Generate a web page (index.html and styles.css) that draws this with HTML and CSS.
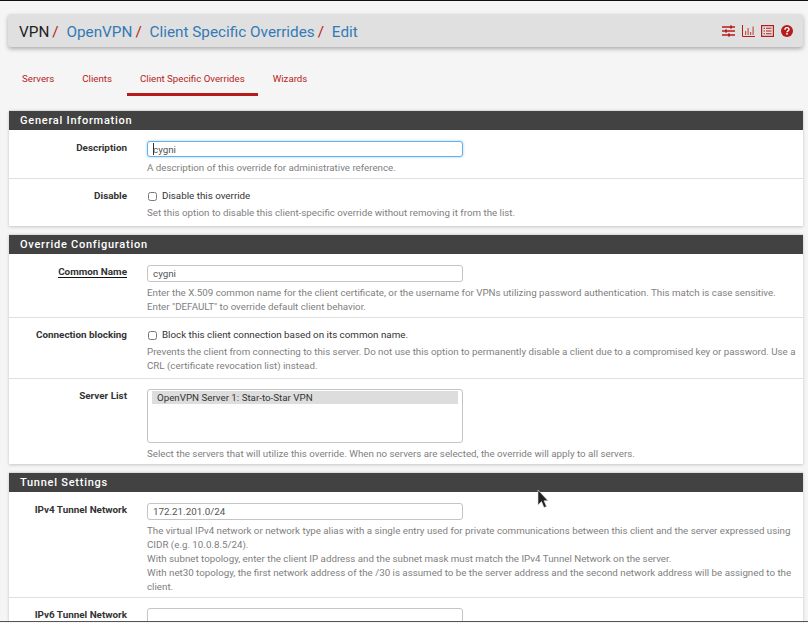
FILE: index.html
```html
<!DOCTYPE html>
<html lang="en">
<head>
  <meta charset="UTF-8">
  <title>VPN: OpenVPN: Client Specific Overrides: Edit</title>
  <link rel="stylesheet" href="styles.css">
</head>
<body>
  <div class="breadcrumb-bar">
    <div class="crumbs">
      <span>VPN</span><i>/</i>
      <a href="#">OpenVPN</a><i>/</i>
      <a href="#">Client Specific Overrides</a><i>/</i>
      <a href="#">Edit</a>
    </div>
    <div class="shortcuts">
      <svg width="13" height="12" viewBox="0 0 13 12"><path d="M0 2h13M0 6h13M0 10h13" stroke="#b71c1c" stroke-width="1.300"/><path d="M8 .5h2v3H8zM3 4.500h2v3H3zM6 8.500h2v3H6z" fill="#b71c1c"/></svg>
      <svg width="13" height="12" viewBox="0 0 13 12"><path d="M.5 0v11.500H13" stroke="#b71c1c" fill="none"/><path d="M3 6h1.200v4H3zM5.500 3h1.200v7H5.500zM8 7h1.200v3H8zM10.500 1.500h1.200V10h-1.200z" fill="#c2554d"/></svg>
      <svg width="13" height="12" viewBox="0 0 13 12"><rect x=".6" y=".6" width="11.800" height="10.800" fill="none" stroke="#b71c1c" stroke-width="1.200"/><path d="M2.500 3.300h1.500M5 3.300h5.500M2.500 6h1.500M5 6h5.500M2.500 8.700h1.500M5 8.700h5.500" stroke="#b71c1c" stroke-width="1.100"/></svg>
      <svg width="12" height="12" viewBox="0 0 12 12"><circle cx="6" cy="6" r="6" fill="#b71c1c"/><path d="M4 4.700C4 3.400 4.900 2.600 6 2.600S8 3.300 8 4.400C8 5.800 6 5.900 6 7.300" fill="none" stroke="#fff" stroke-width="1.400"/><rect x="5.200" y="8" width="1.600" height="1.600" fill="#fff"/></svg>
    </div>
  </div>

  <ul class="tabs">
    <li><a href="#">Servers</a></li>
    <li><a href="#">Clients</a></li>
    <li class="active"><a href="#">Client Specific Overrides</a></li>
    <li><a href="#">Wizards</a></li>
  </ul>

  <div class="panel">
    <h2 class="panel-title">General Information</h2>
    <div class="row">
      <label class="row-label">Description</label>
      <div class="row-body">
        <div class="caret-wrap"><input class="field focused" type="text" value="cygni"></div>
        <p class="help">A description of this override for administrative reference.</p>
      </div>
    </div>
    <div class="row row-check row-end">
      <label class="row-label">Disable</label>
      <div class="row-body">
        <label class="check"><input type="checkbox"> Disable this override</label>
        <p class="help">Set this option to disable this client-specific override without removing it from the list.</p>
      </div>
    </div>
  </div>

  <div class="panel">
    <h2 class="panel-title">Override Configuration</h2>
    <div class="row">
      <label class="row-label"><span class="required">Common Name</span></label>
      <div class="row-body">
        <input class="field" type="text" value="cygni">
        <p class="help">Enter the X.509 common name for the client certificate, or the username for VPNs utilizing password authentication. This match is case sensitive.<br>Enter "DEFAULT" to override default client behavior.</p>
      </div>
    </div>
    <div class="row row-check">
      <label class="row-label">Connection blocking</label>
      <div class="row-body">
        <label class="check"><input type="checkbox"> Block this client connection based on its common name.</label>
        <p class="help">Prevents the client from connecting to this server. Do not use this option to permanently disable a client due to a compromised key or password. Use a CRL (certificate revocation list) instead.</p>
      </div>
    </div>
    <div class="row">
      <label class="row-label">Server List</label>
      <div class="row-body">
        <div class="listbox"><div class="option">OpenVPN Server 1: Star-to-Star VPN</div></div>
        <p class="help">Select the servers that will utilize this override. When no servers are selected, the override will apply to all servers.</p>
      </div>
    </div>
  </div>

  <div class="panel">
    <h2 class="panel-title">Tunnel Settings</h2>
    <div class="row">
      <label class="row-label">IPv4 Tunnel Network</label>
      <div class="row-body">
        <input class="field" type="text" value="172.21.201.0/24">
        <p class="help">The virtual IPv4 network or network type alias with a single entry used for private communications between this client and the server expressed using CIDR (e.g. 10.0.8.5/24).<br>With subnet topology, enter the client IP address and the subnet mask must match the IPv4 Tunnel Network on the server.<br>With net30 topology, the first network address of the /30 is assumed to be the server address and the second network address will be assigned to the client.</p>
      </div>
    </div>
    <div class="row">
      <label class="row-label">IPv6 Tunnel Network</label>
      <div class="row-body">
        <input class="field" type="text">
      </div>
    </div>
  </div>

  <div class="screen-edge"></div>
  <svg class="cursor" width="12" height="20" viewBox="0 0 12 20"><path d="M1 1v15l3.500-3.500 2.500 6 2.500-1-2.500-5.800H11z" fill="#222" stroke="#ddd" stroke-width=".6"/></svg>
</body>
</html>
```

FILE: styles.css
```css
html, body {
  height: 623px;
  overflow: hidden;
}
body {
  margin: 0;
  padding: 13px 5px 0 9px;
  background-color: #f5f5f5;
  border-top: 1px solid #111;
  box-sizing: border-box;
  font-family: Roboto, "Liberation Sans", sans-serif;
  font-size: 9.75px;
  color: #222;
}
a {
  text-decoration: none;
}
.breadcrumb-bar {
  display: flex;
  justify-content: space-between;
  align-items: center;
  height: 33px;
  margin-left: -1px;
  padding: 0 10px 0 11px;
  background-color: #e0e0e0;
  border-radius: 3px;
  box-shadow: 0 2px 4px rgba(0, 0, 0, 0.3);
}
.crumbs {
  padding-top: 2px;
  font-size: 15.3px;
  color: #222;
}
.crumbs a {
  color: #337ab7;
}
.crumbs i {
  font-style: normal;
  color: #b71c1c;
  margin: 0 4px 0 3px;
}
.shortcuts {
  display: flex;
  gap: 6.700px;
  align-items: center;
}
.tabs {
  display: flex;
  list-style: none;
  padding: 0;
  margin: 15px 0 14px;
}
.tabs li {
  margin-right: 2px;
}
.tabs a {
  display: block;
  height: 30px;
  line-height: 31px;
  padding: 1px 13px 0;
  border-bottom: 3px solid transparent;
  color: #b71c1c;
  font-size: 9.7px;
}
.tabs li.active a {
  border-bottom-color: #b71c1c;
}
.panel {
  background-color: #fff;
  margin-bottom: 8px;
  box-shadow: 0 1px 3px rgba(0, 0, 0, 0.2);
  border-top: 1px solid #ddd;
}
.panel-title {
  margin: 0 0 1px;
  height: 19px;
  line-height: 20px;
  padding-left: 11px;
  background-color: #424242;
  color: #fff;
  font-size: 11px;
  font-weight: 500;
  letter-spacing: 0.75px;
}
.row {
  display: flex;
  padding: 10px 4px 3px 0;
  border-bottom: 1px solid #e0e0e0;
}
.row:last-child {
  border-bottom: 0;
}
.row-check {
  padding-bottom: 5px;
}
.row-end {
  padding-bottom: 6px;
}
.row-label {
  flex: 0 0 118px;
  text-align: right;
  font-weight: 700;
  font-size: 9.9px;
  line-height: 14px;
  color: #333;
}
.required {
  border-bottom: 1px solid #111;
}
.row-body {
  margin-left: 20px;
  flex: 1;
}
.caret-wrap {
  position: relative;
}
.caret-wrap::after {
  content: "";
  position: absolute;
  left: 6px;
  top: 2px;
  width: 1px;
  height: 12px;
  background-color: #333;
}
.field {
  display: block;
  box-sizing: border-box;
  width: 316px;
  height: 17px;
  padding: 0 5px;
  border: 1px solid #c4c4c4;
  border-radius: 3px;
  font-family: inherit;
  font-size: 9.8px;
  color: #555;
}
.field.focused {
  height: 16px;
  border-color: #66afe9;
  box-shadow: 0 0 3px rgba(102, 175, 233, 0.6);
}
.check {
  display: flex;
  align-items: center;
  gap: 5px;
  height: 13px;
  padding-bottom: 1px;
  color: #333;
  font-size: 9.8px;
}
.check input {
  margin: 1px 0 0 1px;
  width: 9px;
  height: 9px;
}
.help {
  margin: 3px 0 0;
  line-height: 14px;
  color: #808080;
}
.field + .help,
.caret-wrap + .help,
.listbox + .help {
  margin-top: 4px;
}
.listbox {
  box-sizing: border-box;
  width: 316px;
  height: 54px;
  padding: 1px 4px;
  border: 1px solid #c4c4c4;
  border-radius: 3px;
}
.option {
  height: 13px;
  line-height: 13px;
  padding-left: 5px;
  background-color: #ddd;
  color: #333;
}
.screen-edge {
  position: absolute;
  left: 0;
  right: 0;
  bottom: 0;
  height: 1px;
  border-top: 1px solid #555;
  background-color: #f5f5f5;
}
.cursor {
  position: absolute;
  left: 537px;
  top: 489px;
}
```
